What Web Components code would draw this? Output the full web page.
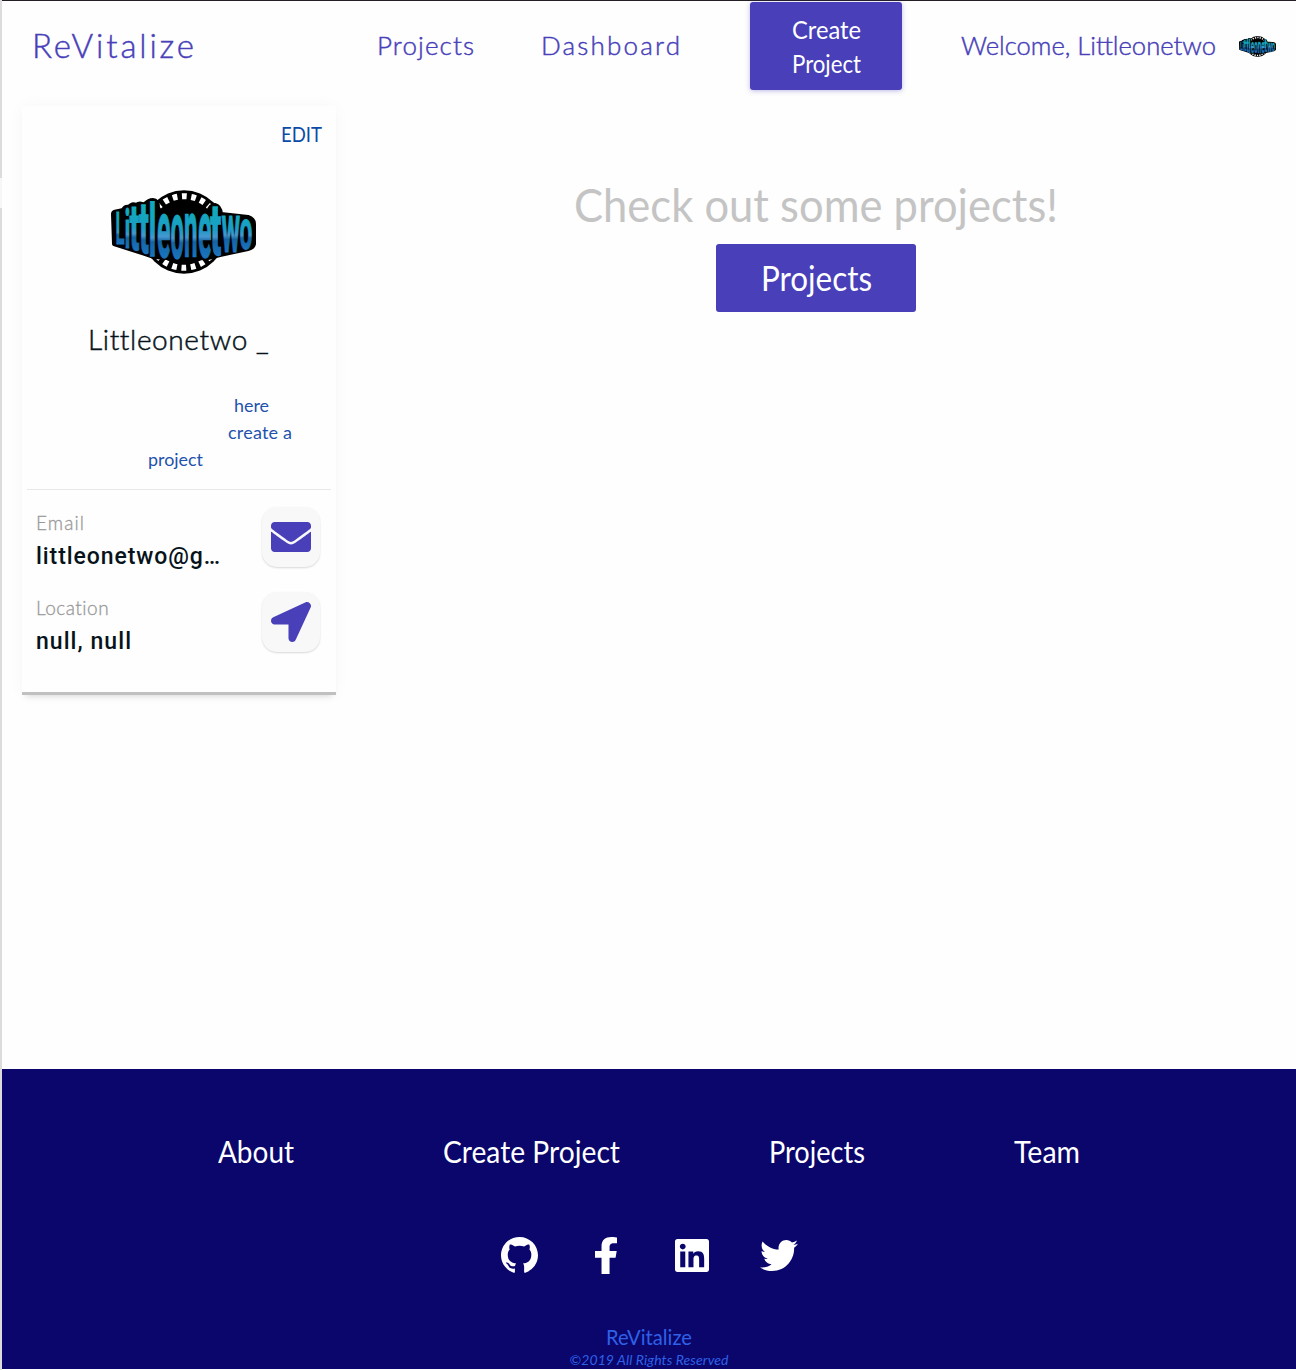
<!DOCTYPE html>
<html lang="en">
<head>
<meta charset="utf-8">
<title>ReVitalize</title>
<style>
  html, body { margin: 0; background: #fefefe; }
  body { font-family: Lato, "Open Sans", sans-serif; }
</style>
</head>
<body>
<revitalize-app></revitalize-app>
<script>
function define(name, html, setup) {
  const tpl = document.createElement('template');
  tpl.innerHTML = html;
  customElements.define(name, class extends HTMLElement {
    constructor() {
      super();
      this.attachShadow({ mode: 'open' }).append(tpl.content.cloneNode(true));
    }
    connectedCallback() { if (setup) setup(this, this.shadowRoot); }
  });
}

/* Single line of text: tracked out, or condensed, to an exact width. */
define('fit-text', `<style>
  :host { display: block; white-space: nowrap; }
  span { display: inline-block; transform-origin: 0 0; vertical-align: top; }
</style><span></span>`, (host, root) => {
  const span = root.querySelector('span');
  const text = host.getAttribute('text');
  const width = parseFloat(host.getAttribute('width'));
  span.textContent = text;
  host.style.width = width + 'px';
  const natural = span.getBoundingClientRect().width;
  if (natural > width) span.style.transform = 'scaleX(' + width / natural + ')';
  else span.style.letterSpacing = ((width - natural) / (text.length - 1)) + 'px';
});

const ICONS = {
  envelope: ['0 64 512 384', 'M502.3 190.8c3.9-3.1 9.7-.2 9.7 4.7V400c0 26.5-21.5 48-48 48H48c-26.5 0-48-21.5-48-48V195.6c0-5 5.7-7.8 9.7-4.7 22.4 17.4 52.1 39.5 154.1 113.6 21.1 15.4 56.7 47.8 92.2 47.6 35.7.3 72-32.8 92.3-47.6 102-74.1 131.6-96.3 154-113.7zM256 320c23.2.4 56.6-29.2 73.4-41.4 132.7-96.3 142.8-104.7 173.4-128.7 5.8-4.5 9.2-11.5 9.2-18.9v-19c0-26.5-21.5-48-48-48H48c-26.5 0-48 21.5-48 48v19c0 7.4 3.4 14.3 9.2 18.9 30.6 23.9 40.7 32.4 173.4 128.7 16.8 12.2 50.2 41.8 73.4 41.4z'],
  arrow: ['0 0 512 512', 'M444.52 3.52L28.74 195.42c-47.97 22.39-31.98 92.75 19.19 92.75h175.91v175.91c0 51.17 70.36 67.17 92.75 19.19l191.9-415.78c15.99-38.39-25.59-79.97-63.97-63.97z'],
  github: ['0 0 16 15.7', 'M8 0C3.58 0 0 3.58 0 8c0 3.54 2.29 6.53 5.47 7.59.4.07.55-.17.55-.38 0-.19-.01-.82-.01-1.49-2.01.37-2.53-.49-2.69-.94-.09-.23-.48-.94-.82-1.13-.28-.15-.68-.52-.01-.53.63-.01 1.08.58 1.23.82.72 1.21 1.87.87 2.33.66.07-.52.28-.87.51-1.07-1.78-.2-3.64-.89-3.64-3.95 0-.87.31-1.59.82-2.15-.08-.2-.36-1.02.08-2.12 0 0 .67-.21 2.2.82.64-.18 1.32-.27 2-.27.68 0 1.36.09 2 .27 1.53-1.04 2.2-.82 2.2-.82.44 1.1.16 1.92.08 2.12.51.56.82 1.27.82 2.15 0 3.07-1.87 3.75-3.65 3.95.29.25.54.73.54 1.48 0 1.07-.01 1.93-.01 2.2 0 .21.15.46.55.38A8.013 8.013 0 0016 8c0-4.42-3.58-8-8-8z'],
  facebook: ['22.9 0 274.2 512', 'M279.14 288l14.22-92.66h-88.91v-60.13c0-25.35 12.42-50.06 52.24-50.06h40.42V6.26S260.43 0 225.36 0c-73.22 0-121.08 44.38-121.08 124.72v70.62H22.89V288h81.39v224h100.17V288z'],
  linkedin: ['0 32 448 448', 'M416 32H31.9C14.3 32 0 46.5 0 64.3v383.4C0 465.5 14.3 480 31.9 480H416c17.6 0 32-14.5 32-32.3V64.3c0-17.8-14.4-32.3-32-32.3zM135.4 416H69V202.2h66.5V416zm-33.2-243c-21.3 0-38.5-17.3-38.5-38.5S80.9 96 102.2 96c21.2 0 38.5 17.3 38.5 38.5 0 21.3-17.2 38.5-38.5 38.5zm282.1 243h-66.4V312c0-24.8-.5-56.7-34.5-56.7-34.6 0-39.9 27-39.9 54.9V416h-66.4V202.2h63.7v29.2h.9c8.9-16.8 30.6-34.5 62.9-34.5 67.2 0 79.7 44.3 79.7 101.9V416z'],
  twitter: ['0 48 512 416', 'M459.37 151.716c.325 4.548.325 9.097.325 13.645 0 138.72-105.583 298.558-298.558 298.558-59.452 0-114.68-17.219-161.137-47.106 8.447.974 16.568 1.299 25.34 1.299 49.055 0 94.213-16.568 130.274-44.832-46.132-.975-84.792-31.188-98.112-72.772 6.498.974 12.995 1.624 19.818 1.624 9.421 0 18.843-1.3 27.614-3.573-48.081-9.747-84.143-51.98-84.143-102.985v-1.299c13.969 7.797 30.214 12.67 47.431 13.319-28.264-18.843-46.781-51.005-46.781-87.391 0-19.492 5.197-37.36 14.294-52.954 51.655 63.675 129.3 105.258 216.365 109.807-1.624-7.797-2.599-15.918-2.599-24.04 0-57.828 46.782-104.934 104.934-104.934 30.213 0 57.502 12.67 76.67 33.137 23.715-4.548 46.456-13.32 66.599-25.34-7.798 24.366-24.366 44.833-46.132 57.827 21.117-2.273 41.584-8.122 60.426-16.243-14.292 20.791-32.161 39.308-52.628 54.253z']
};
define('app-icon', `<style>:host { display: block; } svg { display: block; fill: currentColor; }</style>
<svg preserveAspectRatio="none"><path/></svg>`, (host, root) => {
  const [box, d] = ICONS[host.getAttribute('name')];
  const svg = root.querySelector('svg');
  svg.setAttribute('viewBox', box);
  svg.setAttribute('width', host.getAttribute('w'));
  svg.setAttribute('height', host.getAttribute('h'));
  root.querySelector('path').setAttribute('d', d);
});

/* Film-reel badge: letter, left, width, top, bottom, advance (em), height (em). */
const LETTERS = [
  ['L', 4.5, 9, 22, 54, .54, .71], ['i', 13.5, 6, 18, 58, .27, .74], ['t', 18.5, 10, 17, 60, .34, .66],
  ['t', 28, 10, 15, 63, .34, .66], ['l', 37.5, 8, 13, 66, .27, .74], ['e', 46, 13.5, 24, 67, .54, .54],
  ['o', 59.5, 13.5, 25, 68, .57, .54], ['n', 73, 13.5, 25, 67, .56, .53], ['e', 87, 13.5, 24, 67, .54, .54],
  ['t', 99, 11.5, 17, 65, .34, .66], ['w', 110.5, 19, 26, 62, .75, .53], ['o', 128.5, 13, 29, 59, .57, .54]
];
define('reel-logo', `<style>:host { display: block; } svg { display: block; width: 100%; height: 100%; overflow: visible; }
text { font: 700 20px Roboto, sans-serif; }</style>
<svg viewBox="0 0 145 84" preserveAspectRatio="none">
  <defs><linearGradient id="g" x1="0" y1="0" x2="0" y2="1">
    <stop offset=".3" stop-color="#12a9bd"/><stop offset=".5" stop-color="#1c9cc6"/>
    <stop offset=".58" stop-color="#4596cf"/><stop offset=".63" stop-color="#1464a5"/>
    <stop offset=".85" stop-color="#1c78c4"/></linearGradient></defs>
  <circle cx="73" cy="42" r="41.8"/>
  <circle cx="73" cy="42" r="35.8" fill="none" stroke="#fff" stroke-width="6" stroke-dasharray="4.8 4.57" stroke-dashoffset="2.3"/>
  <path stroke="#000" stroke-width="4" stroke-linejoin="round" d="M2 24Q2 22 5 21.5Q9 21 12 20Q14 16 18 17Q21 13 25 15Q29 12 33 15Q37 10 42 10Q47 10 47 18L50 22L97 22Q99 15 104 15Q109 16 110 24L137 27Q143 29 143 34V54Q142 58 137 59L109 65L97 68L70 69L43 67L28 62L3 54Z"/>
  <g id="word"></g>
</svg>`, (host, root) => {
  root.querySelector('#word').innerHTML = LETTERS.map(([c, x, w, t, b, adv, h]) =>
    `<text fill="url(#g)" stroke="url(#g)" stroke-width=".35" transform="translate(${x} ${b}) scale(${w / (adv * 20)} ${(b - t) / (h * 20)})">${c}</text>`).join('');
});

define('site-header', `<style>
  :host { display: flex; align-items: center; height: 90px; color: #483fb9; }
  fit-text { font-size: 26px; line-height: 34px; font-weight: 300; -webkit-text-stroke: .45px; }
  .brand { font-size: 33px; margin: 0 183px 2px 30px; }
  nav { display: flex; gap: 67px; padding-bottom: 2px; }
  .create { width: 152px; height: 88px; box-sizing: border-box; padding-top: 10px; margin: 0 59px 0 70px;
    background: #483fb9; color: #fff; border-radius: 3px; box-shadow: 0 1px 5px rgba(72,63,185,.35);
    display: flex; flex-direction: column; align-items: center; }
  .create fit-text { font-size: 25px; font-weight: 400; -webkit-text-stroke: 0; }
  .hi { margin: 0 23px 2px 0; }
  reel-logo { width: 37px; height: 21px; }
</style>
<fit-text class="brand" text="ReVitalize" width="162"></fit-text>
<nav><fit-text text="Projects" width="97"></fit-text><fit-text text="Dashboard" width="139"></fit-text></nav>
<div class="create"><fit-text text="Create" width="69"></fit-text><fit-text text="Project" width="69"></fit-text></div>
<fit-text class="hi" text="Welcome, Littleonetwo" width="255"></fit-text>
<reel-logo></reel-logo>`);

define('info-row', `<style>
  :host { display: flex; justify-content: space-between; height: 85px; }
  .tile { width: 58px; height: 60px; border-radius: 15px; background: #f8f8f8; color: #483fb9;
    box-shadow: 0 1px 2px rgba(0,0,0,.15); display: grid; place-items: center; }
</style>
<div><slot name="label"></slot><slot name="value"></slot></div><div class="tile"><slot></slot></div>`);

define('profile-card', `<style>
  :host { display: flex; flex-direction: column; width: 314px; height: 589px; box-sizing: border-box;
    border-bottom: 3px solid #c0c0c0; box-shadow: 0 5px 6px -4px rgba(0,0,0,.14), 0 0 16px rgba(0,0,0,.03); background: #fefefe; }
  .edit { align-self: flex-end; margin: 13px 14px 0 0; font-size: 22px; line-height: 30px; color: #0b4ba8; }
  reel-logo { width: 145px; height: 84px; margin: 41px 0 0 89px; }
  .name { font-size: 28px; line-height: 36px; margin: 47px 0 0 66px; color: #06131a; font-weight: 300; -webkit-text-stroke: .5px; }
  .bio { margin-top: 35px; font-size: 18px; line-height: 27px; color: #1f52ad; height: 97px; }
  .here { margin-left: 212px; } .make { margin-left: 206px; } .proj { margin-left: 126px; }
  hr { margin: 0 5px; border: 0; border-top: 1px solid #e8e8e8; height: 0; width: 304px; }
  .rows { padding: 17px 16px 0 14px; }
  .label { color: #999; font-size: 19px; line-height: 32px; font-weight: 300; -webkit-text-stroke: .3px; }
  .value { margin-top: 2px; color: #06131a; font: 500 23px/32px Roboto, sans-serif; }
</style>
<fit-text class="edit" text="EDIT" width="41"></fit-text>
<reel-logo></reel-logo>
<fit-text class="name" text="Littleonetwo _" width="180"></fit-text>
<div class="bio">
  <fit-text class="here" text="here" width="35"></fit-text>
  <fit-text class="make" text="create a" width="64"></fit-text>
  <fit-text class="proj" text="project" width="55"></fit-text>
</div>
<hr>
<div class="rows">
  <info-row><fit-text slot="label" class="label" text="Email" width="48"></fit-text>
    <fit-text slot="value" class="value" text="littleonetwo@g…" width="184"></fit-text>
    <app-icon name="envelope" w="40" h="30"></app-icon></info-row>
  <info-row><fit-text slot="label" class="label" text="Location" width="73"></fit-text>
    <fit-text slot="value" class="value" text="null, null" width="95"></fit-text>
    <app-icon name="arrow" w="40" h="40"></app-icon></info-row>
</div>`);

define('project-prompt', `<style>
  :host { display: flex; flex-direction: column; align-items: center; }
  .title { font-size: 47px; line-height: 60px; color: #c4c4c4; }
  .btn { display: flex; justify-content: center; align-items: center; width: 200px; height: 68px;
    margin-top: 10px; background: #483fb9; border-radius: 3px; color: #fff; }
  .btn fit-text { font-size: 35px; line-height: 44px; margin-bottom: 2px; }
</style>
<fit-text class="title" text="Check out some projects!" width="484"></fit-text>
<div class="btn"><fit-text text="Projects" width="111"></fit-text></div>`);

define('site-footer', `<style>
  :host { display: flex; flex-direction: column; align-items: center; height: 300px; background: #0a066c; color: #fff; }
  nav { display: flex; gap: 149px; margin-top: 62px; font-size: 30px; line-height: 40px; }
  .social { display: flex; gap: 48.4px; margin-top: 64px; height: 40px; }
  .social > div { width: 38px; display: grid; place-items: center; }
  .brand { margin-top: 48px; font-size: 22px; line-height: 28px; color: #2f60e6; }
  .copy { font-size: 14px; line-height: 18px; font-style: italic; color: #2f60e6; }
</style>
<nav><fit-text text="About" width="76"></fit-text><fit-text text="Create Project" width="177"></fit-text>
<fit-text text="Projects" width="96"></fit-text><fit-text text="Team" width="66"></fit-text></nav>
<div class="social">
  <div><app-icon name="github" w="37" h="36"></app-icon></div>
  <div><app-icon name="facebook" w="22" h="37"></app-icon></div>
  <div><app-icon name="linkedin" w="34" h="33"></app-icon></div>
  <div><app-icon name="twitter" w="38" h="31"></app-icon></div>
</div>
<fit-text class="brand" text="ReVitalize" width="86"></fit-text>
<fit-text class="copy" text="©2019 All Rights Reserved" width="159"></fit-text>`);

define('revitalize-app', `<style>
  :host { display: flex; height: 1370px; box-sizing: border-box; overflow: hidden; }
  .edge { width: 2px; background: linear-gradient(#dcdcdc 178px, #f7f7f7 178px 208px, #dcdcdc 208px); }
  .page { flex: 1; border-top: 1px solid #231f24; }
  main { display: flex; height: 978px; }
  profile-card { margin: 15px 0 0 20px; }
  project-prompt { flex: 1; padding: 83px 0 0; }
</style>
<div class="edge"></div>
<div class="page">
  <site-header></site-header>
  <main><profile-card></profile-card><project-prompt></project-prompt></main>
  <site-footer></site-footer>
</div>`);
</script>
</body>
</html>
